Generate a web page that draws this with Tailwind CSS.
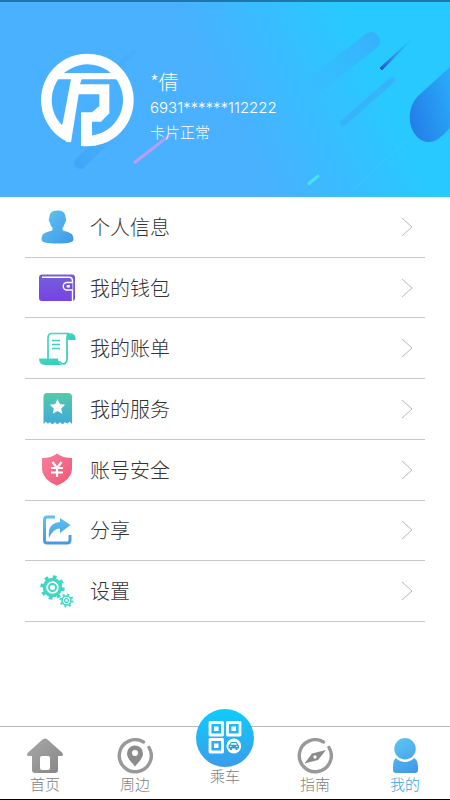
<!DOCTYPE html>
<html lang="zh-CN">
<head>
<meta charset="utf-8">
<meta name="viewport" content="width=device-width, initial-scale=1">
<title>我的</title>
<script src="https://cdn.jsdelivr.net/npm/@tailwindcss/browser@4"></script>
</head>
<body class="flex min-h-screen flex-col border-b border-black bg-white font-['Noto_Sans_CJK_SC',sans-serif] font-light text-[#333]">
<header class="relative flex h-[197px] items-center gap-4 overflow-hidden border-t-2 border-[#2075a9] bg-[#49b1ff] pl-10">
  <svg class="absolute inset-0 size-full" viewBox="0 2 450 195" preserveAspectRatio="xMaxYMid slice" aria-hidden="true">
    <defs>
      <linearGradient id="sky" gradientUnits="userSpaceOnUse" x1="240" y1="130" x2="370" y2="65"><stop stop-color="#49b1ff"/><stop offset="1" stop-color="#28c9ff"/></linearGradient>
      <linearGradient id="beam" gradientUnits="userSpaceOnUse" x1="376" y1="40" x2="300" y2="104"><stop stop-color="#36b1fc"/><stop offset="1" stop-color="#3fb7ff" stop-opacity="0"/></linearGradient>
      <linearGradient id="shade" gradientUnits="userSpaceOnUse" x1="80" y1="162" x2="136" y2="110"><stop stop-color="#40a6f7"/><stop offset="1" stop-color="#49b1ff" stop-opacity="0"/></linearGradient>
      <linearGradient id="pill" gradientUnits="userSpaceOnUse" x1="410" y1="118" x2="456" y2="105"><stop stop-color="#247fe9"/><stop offset="1" stop-color="#29a9f8"/></linearGradient>
      <linearGradient id="violet" gradientUnits="userSpaceOnUse" x1="134" y1="163" x2="190" y2="118"><stop stop-color="#c49bf8"/><stop offset=".5" stop-color="#b09ffa"/><stop offset="1" stop-color="#49b1ff" stop-opacity="0"/></linearGradient>
      <linearGradient id="indigo" gradientUnits="userSpaceOnUse" x1="381" y1="69" x2="418" y2="33"><stop stop-color="#3253d2"/><stop offset="1" stop-color="#28c9ff" stop-opacity="0"/></linearGradient>
    </defs>
    <rect y="2" width="450" height="195" fill="url(#sky)"/>
    <path d="M80 163 134 112" stroke="url(#shade)" stroke-width="12" stroke-linecap="round"/>
    <path d="M118 66 136 50" stroke="#44acfd" stroke-width="5" opacity=".5"/>
    <path d="M371 41 296 100" stroke="url(#beam)" stroke-width="18" stroke-linecap="round"/>
    <path d="M343 123 392 80" stroke="#35b3fb" stroke-width="6" stroke-linecap="round"/>
    <path d="M380 68 418 33 382 70Z" fill="url(#indigo)" stroke="url(#indigo)"/>
    <path d="M134 163 188 121" stroke="url(#violet)" stroke-width="3"/>
    <path d="M309 183.500 318 176" stroke="#45e5ee" stroke-width="3" stroke-linecap="round"/>
    <path d="M353 190 405 141" stroke="#39ccff" stroke-width="1"/>
    <path d="M450 67 418 96C402 113 411 142 429 142 436 142 440 138 450 128Z" fill="url(#pill)"/>
  </svg>
  <svg class="relative size-[94px] shrink-0" viewBox="120 159 282 282" role="img" aria-label="头像">
    <path d="M209 411A123 123 0 1 1 246 422" fill="none" stroke="#fff" stroke-width="32"/>
    <path fill="#fff" d="M165 219H360V238H245L240 253H328V340L303 365H276V420L243 438V337H276L298 318V283H236L213 427 200 426 176 390 188 370 213 238H165Z"/>
  </svg>
  <div class="relative pt-3 text-white">
    <h1 class="text-[20px] leading-7">*倩</h1>
    <p class="font-[Inter,sans-serif] text-[15px] leading-6">6931******112222</p>
    <p class="text-[15px] leading-6">卡片正常</p>
  </div>
</header>

<main class="flex-1">
  <ul class="mx-[25px] grid h-[425px] auto-rows-fr text-[20px]">
    <li class="border-b border-[#c8c8c8]"><a href="#profile" class="flex h-full items-center">
      <svg class="mx-[13px] size-[39px]" viewBox="0 0 39 39" aria-hidden="true"><defs><linearGradient id="a" x2="1" y2="1"><stop stop-color="#62c5ef"/><stop offset="1" stop-color="#3c98ea"/></linearGradient></defs><path fill="url(#a)" d="M19 3.500C24.500 2.800 28 6 27.500 11 28.600 11.400 28.300 14.600 27 15.400 26.500 18 25.300 19.500 24.500 21V23C27 25.500 35.500 24 35.500 32 35.500 35.500 31 36.500 19.500 36.500S3.500 35.500 3.500 32C3.500 24 12 25.500 14.500 23V21C13.500 19.500 12.300 18 12 15.400 10.700 14.600 10.300 11.500 11.500 11 11 7 13.500 3.500 19 3.500Z"/></svg>
      <span class="flex-1">个人信息</span><svg class="mr-3 h-5 w-3" viewBox="0 0 12 20" fill="none" stroke="#b8b8b8" aria-hidden="true"><path d="M1 1 11 10 1 19"/></svg></a></li>
    <li class="border-b border-[#c8c8c8]"><a href="#wallet" class="flex h-full items-center">
      <svg class="mx-[13px] size-[39px]" viewBox="0 0 39 39" aria-hidden="true"><defs><linearGradient id="b" x2="0" y2="1"><stop stop-color="#7460d8"/><stop offset="1" stop-color="#7842e5"/></linearGradient></defs><rect x="1" y="6.500" width="36" height="26.500" rx="3" fill="url(#b)"/><path d="M4 9.300H31Q34.500 9.300 34.500 13V33" fill="none" stroke="#fff" stroke-width="1.400"/><path d="M34.500 14.500H29A3.700 3.700 0 0 0 29 22H34.500" fill="#7250dc" stroke="#fff" stroke-width="1.400"/><rect x="28.500" y="17" width="3.500" height="2.500" rx="1" fill="#fff"/></svg>
      <span class="flex-1">我的钱包</span><svg class="mr-3 h-5 w-3" viewBox="0 0 12 20" fill="none" stroke="#b8b8b8" aria-hidden="true"><path d="M1 1 11 10 1 19"/></svg></a></li>
    <li class="border-b border-[#c8c8c8]"><a href="#bills" class="flex h-full items-center">
      <svg class="mx-[13px] size-[39px]" viewBox="0 0 39 39" aria-hidden="true"><defs><linearGradient id="c" x2="1" y2="1"><stop stop-color="#40d9be"/><stop offset="1" stop-color="#36c8bc"/></linearGradient></defs><path fill="url(#c)" d="M30 4.500C35 3.500 38 6 37.500 11H30Z"/><path fill="#fff" stroke="url(#c)" stroke-width="1.700" d="M31 4.500H14Q10 4.500 10 9V33H22C26 37 29 34 29 30V9Q29 5 31 4.500Z"/><path fill="url(#c)" d="M1 29.500H20C20 33 22 35.500 25 36H7Q1 35.500 1 29.500Z"/><path d="M14 11.500H22M14 15.500H22M14 19.500H22" stroke="#42ccc4" stroke-width="1.400"/></svg>
      <span class="flex-1">我的账单</span><svg class="mr-3 h-5 w-3" viewBox="0 0 12 20" fill="none" stroke="#b8b8b8" aria-hidden="true"><path d="M1 1 11 10 1 19"/></svg></a></li>
    <li class="border-b border-[#c8c8c8]"><a href="#services" class="flex h-full items-center">
      <svg class="mx-[13px] size-[39px]" viewBox="0 0 39 39" aria-hidden="true"><defs><linearGradient id="d" x2="0" y2="1"><stop stop-color="#53cba6"/><stop offset="1" stop-color="#3faadc"/></linearGradient></defs><path fill="url(#d)" d="M9 4H30Q34 4 34 8V35L31.500 32.500Q29.500 36 27 33 24.500 37 22 33 19.500 37 17 33 14.500 37 12 33 9.500 36 8 32.500L5.500 35V8Q5.500 4 9 4Z"/><path fill="#fff" d="M19.500 10 21.800 15 27.200 15.700 23.200 19.400 24.300 24.800 19.500 22.100 14.700 24.800 15.800 19.400 11.800 15.700 17.200 15Z"/></svg>
      <span class="flex-1">我的服务</span><svg class="mr-3 h-5 w-3" viewBox="0 0 12 20" fill="none" stroke="#b8b8b8" aria-hidden="true"><path d="M1 1 11 10 1 19"/></svg></a></li>
    <li class="border-b border-[#c8c8c8]"><a href="#security" class="flex h-full items-center">
      <svg class="mx-[13px] size-[39px]" viewBox="0 0 39 39" aria-hidden="true"><defs><linearGradient id="e" x2="1" y2="1"><stop stop-color="#f8829c"/><stop offset="1" stop-color="#ee5475"/></linearGradient></defs><path fill="url(#e)" d="M19 3.500Q25 8 34 8V19Q33 30 19 35.500 5 30 4 19V8Q13 8 19 3.500Z"/><path d="M14.500 12 19 18 23.500 12M19 18V27M13 18H25M13 22.500H25" fill="none" stroke="#fff" stroke-width="2.200"/></svg>
      <span class="flex-1">账号安全</span><svg class="mr-3 h-5 w-3" viewBox="0 0 12 20" fill="none" stroke="#b8b8b8" aria-hidden="true"><path d="M1 1 11 10 1 19"/></svg></a></li>
    <li class="border-b border-[#c8c8c8]"><a href="#share" class="flex h-full items-center">
      <svg class="mx-[13px] size-[39px]" viewBox="0 0 39 39" aria-hidden="true"><defs><linearGradient id="f" gradientUnits="userSpaceOnUse" x1="0" y1="4" x2="0" y2="34"><stop stop-color="#5cc4f1"/><stop offset="1" stop-color="#4696df"/></linearGradient></defs><path d="M17 6H9Q6.500 6 6.500 9V29Q6.500 32 9 32H29Q32 32 32 29V24" fill="none" stroke="url(#f)" stroke-width="3"/><path fill="url(#f)" d="M22 7 32.500 14 22 22V17.500Q15 17.500 11 27 9 12 22 11Z"/></svg>
      <span class="flex-1">分享</span><svg class="mr-3 h-5 w-3" viewBox="0 0 12 20" fill="none" stroke="#b8b8b8" aria-hidden="true"><path d="M1 1 11 10 1 19"/></svg></a></li>
    <li class="border-b border-[#c8c8c8]"><a href="#settings" class="flex h-full items-center">
      <svg class="mx-[13px] size-[39px]" viewBox="0 0 39 39" fill="none" stroke="#42d6c5" aria-hidden="true"><circle cx="14.500" cy="15.500" r="8" stroke-width="3.500"/><circle cx="14.500" cy="15.500" r="10.500" stroke-width="3.500" stroke-dasharray="3.600 4.647"/><circle cx="14.500" cy="15.500" r="3.500" stroke-width="2"/><circle cx="28.500" cy="28.500" r="4.500" stroke-width="1.600"/><circle cx="28.500" cy="28.500" r="6" stroke-width="2" stroke-dasharray="2 2.712"/><circle cx="28.500" cy="28.500" r="1.900" stroke-width="1.300"/></svg>
      <span class="flex-1">设置</span><svg class="mr-3 h-5 w-3" viewBox="0 0 12 20" fill="none" stroke="#b8b8b8" aria-hidden="true"><path d="M1 1 11 10 1 19"/></svg></a></li>
  </ul>
</main>

<nav class="grid h-[73px] grid-cols-5 border-t border-[#b8b8b8] text-[15px] leading-5 text-[#808080]">
  <a href="#home" class="flex flex-col items-center justify-end pb-[5px]">
    <svg class="size-9" viewBox="0 0 36 36" aria-hidden="true"><defs><linearGradient id="g" x2="1" y2="1"><stop stop-color="#aaa"/><stop offset="1" stop-color="#858585"/></linearGradient></defs><path fill="url(#g)" fill-rule="evenodd" d="M15.500 1.500Q18 -.500 20.500 1.500L35.500 15Q37 18 34 18H31V32Q31 35 28 35H8Q5 35 5 32V18H2Q-1 18 .500 15ZM15 18Q13 18 13 20V30Q13 32 15 32H21Q23 32 23 30V20Q23 18 21 18Z"/></svg>首页</a>
  <a href="#nearby" class="flex flex-col items-center justify-end pb-[5px]">
    <svg class="size-9" viewBox="0 0 36 36" aria-hidden="true"><path d="M26.500 4A16 16 0 1 0 32 9.500" fill="none" stroke="#999" stroke-width="3.400" stroke-linecap="round"/><path fill="#8c8c8c" fill-rule="evenodd" d="M18 7.500A8 8 0 0 1 26 15.500C26 20 21 25 18 28.500 15 25 10 20 10 15.500A8 8 0 0 1 18 7.500ZM18 12A3 3 0 1 0 18 18 3 3 0 0 0 18 12Z"/></svg>周边</a>
  <a href="#ride" class="relative flex flex-col items-center justify-end pb-[13px]">
    <svg class="absolute -top-[19px] size-[60px]" viewBox="0 0 60 60" aria-hidden="true"><defs><linearGradient id="h" x2="0" y2="1"><stop stop-color="#0dcdfa"/><stop offset="1" stop-color="#3c9bec"/></linearGradient></defs><circle cx="30" cy="30" r="29" fill="url(#h)"/><g fill="none" stroke="#fff" stroke-width="2.800" stroke-linejoin="round"><rect x="15" y="14.500" width="12.500" height="12.500"/><rect x="32.500" y="14.500" width="12.500" height="12.500"/><rect x="15" y="31.500" width="12.500" height="12.500"/></g><path fill="#fff" d="M19 18.500H23.500V23H19ZM36.500 18.500H41V23H36.500ZM19 35.500H23.500V40H19Z"/><circle cx="38.800" cy="38" r="7.400" fill="#fff"/><path fill="#2e9fdd" fill-rule="evenodd" d="M36 34H41.500L43 36.500 44 37.500V40.500H42.500V42H40.500V40.500H37V42H35V40.500H33.500V37.500L34.500 36.500ZM36.500 35 35.700 36.700H42L41 35ZM35 38V39H36.500V38ZM41 38V39H42.500V38Z"/></svg>乘车</a>
  <a href="#guide" class="flex flex-col items-center justify-end pb-[5px]">
    <svg class="size-9" viewBox="0 0 36 36" aria-hidden="true"><path d="M26.500 4A16 16 0 1 0 32 9.500" fill="none" stroke="#999" stroke-width="3.400" stroke-linecap="round"/><path fill="#8c8c8c" fill-rule="evenodd" d="M29 12 21 22 7.500 25.500 15 15.500ZM18 17.300A1.700 1.700 0 1 0 18 20.700 1.700 1.700 0 0 0 18 17.300Z"/></svg>指南</a>
  <a href="#me" aria-current="page" class="flex flex-col items-center justify-end pb-[5px] text-[#3d9fe6]">
    <svg class="size-9" viewBox="0 0 36 36" aria-hidden="true"><defs><linearGradient id="i" gradientUnits="userSpaceOnUse" x1="8" y1="0" x2="28" y2="36"><stop stop-color="#5fc6f2"/><stop offset="1" stop-color="#3f97e7"/></linearGradient></defs><path fill="url(#i)" d="M18 0A10.500 10.500 0 1 1 18 21.500 10.500 10.500 0 0 1 18 0ZM8.500 20Q18 28 27.500 20 31 23 31 29V32Q31 35 28 35H9Q6 35 6 32V29Q6 23 8.500 20Z"/></svg>我的</a>
</nav>
</body>
</html>
